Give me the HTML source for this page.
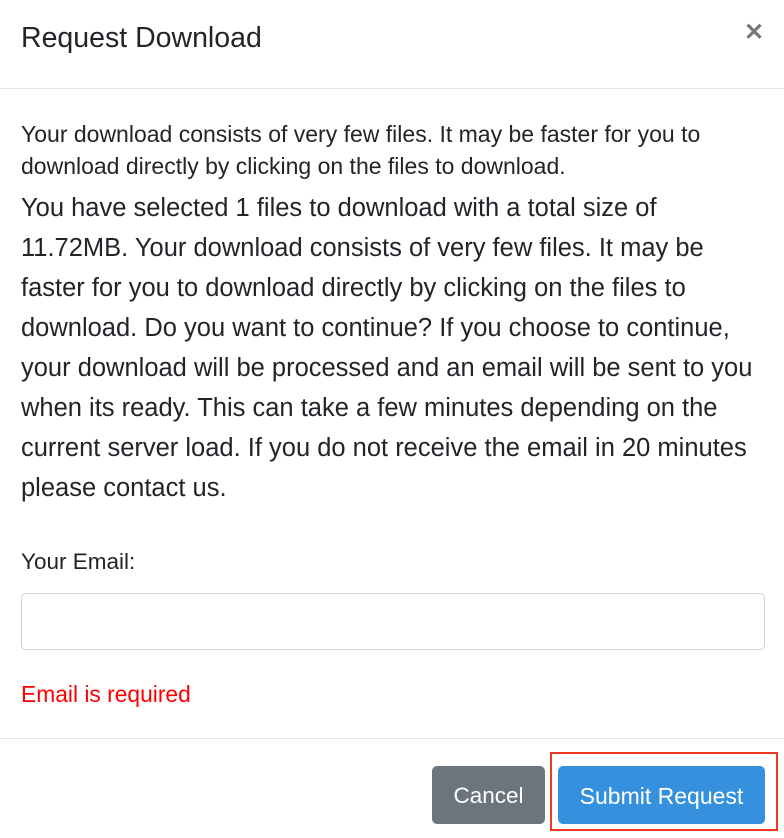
<!DOCTYPE html>
<html><head><style>
body{margin:0;width:784px;height:838px;background:#fff;font-family:"Liberation Sans",Arial,sans-serif;color:#212529;position:relative;overflow:hidden}
.a{position:absolute;white-space:nowrap}
</style></head><body>
<div class="a" style="left:21px;top:21px;font-size:28.5px;line-height:34px">Request Download</div>
<div class="a" style="left:744px;top:18px;font-size:24px;font-weight:bold;color:#777">✕</div>
<div class="a" style="left:0;top:88px;width:784px;height:1px;background:#e3e6ea"></div>
<div class="a" style="left:21px;top:118px;font-size:23px;line-height:32px">Your download consists of very few files. It may be faster for you to<br>download directly by clicking on the files to download.</div>
<div class="a" style="left:21px;top:188px;font-size:25.5px;line-height:40px">You have selected 1 files to download with a total size of<br>11.72MB. Your download consists of very few files. It may be<br>faster for you to download directly by clicking on the files to<br>download. Do you want to continue? If you choose to continue,<br>your download will be processed and an email will be sent to you<br>when its ready. This can take a few minutes depending on the<br>current server load. If you do not receive the email in 20 minutes<br>please contact us.</div>
<div class="a" style="left:21px;top:549px;font-size:22.5px;line-height:26px">Your Email:</div>
<div class="a" style="left:21px;top:593px;width:742px;height:55px;border:1px solid #ced4da;border-radius:5px"></div>
<div class="a" style="left:21px;top:681px;font-size:22.8px;line-height:26px;color:#f00">Email is required</div>
<div class="a" style="left:0;top:738px;width:784px;height:1px;background:#e3e6ea"></div>
<div class="a" style="left:432px;top:766px;width:113px;height:58px;background:#6c757d;border-radius:5px;color:#fff;font-size:22.5px;line-height:60px;text-align:center">Cancel</div>
<div class="a" style="left:550px;top:752px;width:224px;height:75px;border:2px solid #f03a23"></div>
<div class="a" style="left:558px;top:766px;width:207px;height:58px;background:#3590dd;border-radius:5px;color:#fff;font-size:23px;line-height:60px;text-align:center">Submit Request</div>
</body></html>
